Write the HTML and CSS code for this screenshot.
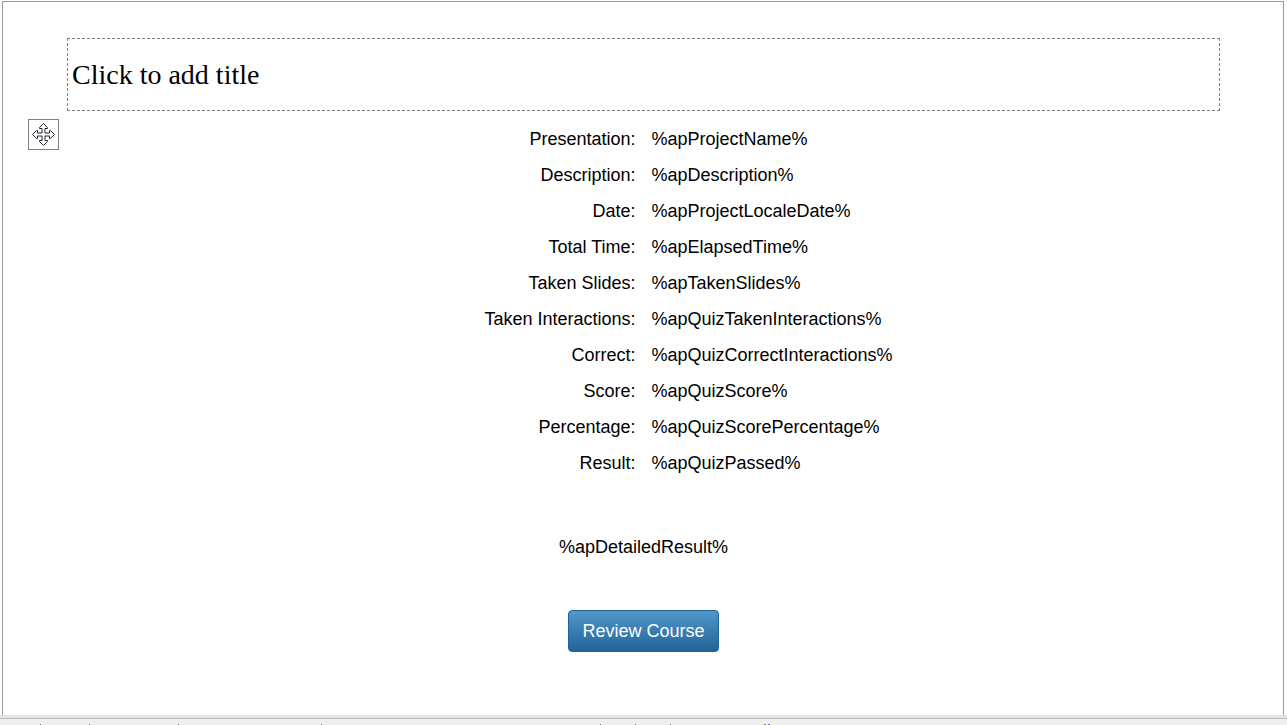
FILE: index.html
```
<!DOCTYPE html>
<html lang="en">
<head>
    <meta charset="UTF-8">
    <title>Course report</title>
    <link rel="stylesheet" href="styles.css">
</head>
<body>
    <main class="slide">
        <input class="slide-title" type="text" placeholder="Click to add title" aria-label="Slide title">

        <button class="move-handle" type="button" aria-label="Move">
            <svg width="23" height="23" viewBox="0 0 23 23">
                <path d="M11.5 .5 L15.5 4.5 V5.5 H13 V10 H17.5 V7.5 H18.5 L22.5 11.5 L18.5 15.5 H17.5 V13 H13 V17.5 H15.5 V18.5 L11.5 22.5 L7.5 18.5 V17.5 H10 V13 H5.5 V15.5 H4.5 L.5 11.5 L4.5 7.5 H5.5 V10 H10 V5.5 H7.5 V4.5 Z"/>
            </svg>
        </button>

        <table class="report">
            <tr><th scope="row">Presentation:</th><td>%apProjectName%</td></tr>
            <tr><th scope="row">Description:</th><td>%apDescription%</td></tr>
            <tr><th scope="row">Date:</th><td>%apProjectLocaleDate%</td></tr>
            <tr><th scope="row">Total Time:</th><td>%apElapsedTime%</td></tr>
            <tr><th scope="row">Taken Slides:</th><td>%apTakenSlides%</td></tr>
            <tr><th scope="row">Taken Interactions:</th><td>%apQuizTakenInteractions%</td></tr>
            <tr><th scope="row">Correct:</th><td>%apQuizCorrectInteractions%</td></tr>
            <tr><th scope="row">Score:</th><td>%apQuizScore%</td></tr>
            <tr><th scope="row">Percentage:</th><td>%apQuizScorePercentage%</td></tr>
            <tr><th scope="row">Result:</th><td>%apQuizPassed%</td></tr>
        </table>

        <p class="details">%apDetailedResult%</p>

        <button class="review" type="button">Review Course</button>
    </main>

    <footer class="bottom-bar">
        <svg class="ticks" width="780" height="1" shape-rendering="crispEdges" aria-hidden="true">
            <path d="M40 0h1v1h-1z M89 0h1v1h-1z M178 0h1v1h-1z M321 0h1v1h-1z M600 0h1v1h-1z M635 0h1v1h-1z M670 0h1v1h-1z"/>
            <path class="accent" d="M764 0h2v1h-2z M768 0h2v1h-2z"/>
        </svg>
    </footer>
</body>
</html>
```
FILE: styles.css
```
* {
    box-sizing: border-box;
}
body {
    display: flex;
    flex-direction: column;
    min-height: 100vh;
    margin: 0;
    background-color: #fff;
    color: #000;
    font-family: "Liberation Sans", Arial, sans-serif;
    font-size: 18px;
}
.slide {
    position: relative;
    flex: 1;
    display: flex;
    flex-direction: column;
    align-items: center;
    margin: 1px 3px 0 2px;
    padding: 36px 63px 0 64px;
    border: 1px solid #999;
    border-bottom: none;
}
.slide-title {
    width: 100%;
    height: 73px;
    padding: 0 4px;
    border: 1px dashed #808080;
    background: none;
    color: #000;
    font-family: "Liberation Serif", "Times New Roman", serif;
    font-size: 28px;
}
.slide-title::placeholder {
    color: #000;
    opacity: 1;
}
/* sits in the margin of the slide, beside the report */
.move-handle {
    position: absolute;
    top: 117px;
    left: 25px;
    display: flex;
    align-items: center;
    justify-content: center;
    width: 31px;
    height: 31px;
    padding: 0;
    border: 1px solid #808080;
    background-color: #fff;
    cursor: move;
}
.move-handle path {
    fill: #fff;
    stroke: #22222e;
}
.report {
    width: 100%;
    margin-top: 10px;
    border-collapse: collapse;
    table-layout: fixed;
}
.report th,
.report td {
    width: 50%;
    padding: 8px;
    line-height: 20px;
    text-align: left;
}
.report th {
    font-weight: normal;
    text-align: right;
}
.details {
    margin: 56px 0 53px;
    line-height: 20px;
}
.review {
    height: 42px;
    padding: 0 13px;
    border: 1px solid #1f6496;
    border-radius: 4px;
    background: linear-gradient(#5097cb, #236496);
    color: #fff;
    font-family: inherit;
    font-size: 18px;
    cursor: pointer;
}
.bottom-bar {
    height: 10px;
    padding-top: 5px;
    border-top: 3px solid #e5e5e5;
    background-color: #efefef;
    box-shadow: inset 0 1px #b9b9b9;
}
.ticks {
    display: block;
    margin-top: 1px;
    fill: #777;
}
.ticks .accent {
    fill: #7a70ac;
}
```
